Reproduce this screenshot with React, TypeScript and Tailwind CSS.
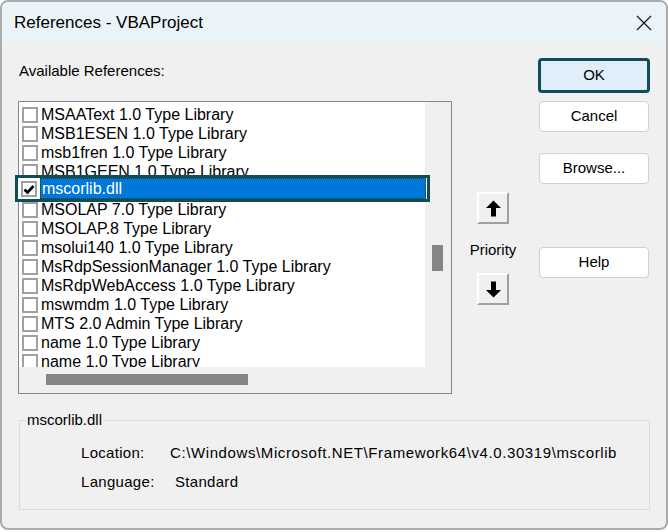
import React from "react";

const items = [
  "MSAAText 1.0 Type Library",
  "MSB1ESEN 1.0 Type Library",
  "msb1fren 1.0 Type Library",
  "MSB1GEEN 1.0 Type Library",
  "mscorlib.dll",
  "MSOLAP 7.0 Type Library",
  "MSOLAP.8 Type Library",
  "msolui140 1.0 Type Library",
  "MsRdpSessionManager 1.0 Type Library",
  "MsRdpWebAccess 1.0 Type Library",
  "mswmdm 1.0 Type Library",
  "MTS 2.0 Admin Type Library",
  "name 1.0 Type Library",
  "name 1.0 Type Library",
];

const SELECTED = 4;

function CheckMark() {
  return (
    <svg width="12" height="11" viewBox="0 0 12 11">
      <polyline points="1.5,5.5 4.5,8.5 10.5,2" fill="none" stroke="#000" strokeWidth="2.6" />
    </svg>
  );
}

function Box({ checked }: { checked?: boolean }) {
  return (
    <div className="w-[16px] h-[16px] border-2 border-[#a0a0a0] bg-white flex items-center justify-center shrink-0">
      {checked && <CheckMark />}
    </div>
  );
}

function Arrow({ down }: { down?: boolean }) {
  return (
    <button className="w-[32px] h-[32px] bg-[#f0f0f0] border-2 border-t-white border-l-white border-r-[#a0a0a0] border-b-[#a0a0a0] flex items-center justify-center">
      <svg width="15" height="17" viewBox="0 0 15 17" className={down ? "rotate-180" : ""}>
        <polygon points="0,8 7.5,0.5 15,8 10,8 10,16.5 5,16.5 5,8" fill="#000" />
      </svg>
    </button>
  );
}

export default function App() {
  return (
    <div className="w-[668px] h-[532px] bg-white" style={{ fontFamily: '"Liberation Sans", Arial, sans-serif' }}>
      <div className="w-[668px] h-[530px] rounded-lg border-2 border-[#ababab] bg-[#f0f0f0] overflow-hidden text-black">
        {/* title bar */}
        <div className="h-[42px] bg-[#eaf4f8] flex items-center justify-between pl-[12px] pr-[14px]">
          <span className="text-[17px]">References - VBAProject</span>
          <svg width="16" height="16" viewBox="0 0 16 16">
            <path d="M1 1 L15 15 M15 1 L1 15" stroke="#1a1a1a" strokeWidth="1.3" />
          </svg>
        </div>

        <div className="pl-[16px] pt-[14px] text-[15px]">
          <div className="flex items-start">
            {/* references list */}
            <div className="w-[434px]">
              <div className="mt-[3px] leading-[20px] pl-[1px]">Available References:</div>
              <div className="mt-[20px] h-[293px] border border-[#828790] flex flex-col">
                <div className="flex h-[265px]">
                  <div className="flex-1 bg-white pt-[3px] overflow-y-clip text-[16px]">
                    {items.map((name, i) => (
                      <div key={i} className="relative h-[19px] flex items-center pl-[3px]">
                        <Box />
                        <span className={`ml-[3px] leading-[19px] whitespace-nowrap ${i === SELECTED ? "invisible" : ""}`}>
                          {name}
                        </span>
                        {i === SELECTED && (
                          <div className="absolute z-10 left-[-4px] right-[-5px] top-[-6px] bottom-[-2px] border-[3px] border-[#0e4e55] bg-white flex items-stretch">
                            <div className="pl-[3px] pt-[1px] flex items-center">
                              <Box checked />
                            </div>
                            <div className="flex-1 ml-[3px] mr-[1px] bg-[#0078d7] border border-dotted border-[#3a2a10] text-white flex items-center pl-[1px]">
                              {name}
                            </div>
                          </div>
                        )}
                      </div>
                    ))}
                  </div>
                  <div className="w-[26px] pt-[143px] pl-[7px]">
                    <div className="w-[11px] h-[26px] bg-[#858585]" />
                  </div>
                </div>
                <div className="h-[26px] pl-[27px] pt-[7px]">
                  <div className="w-[202px] h-[11px] bg-[#858585]" />
                </div>
              </div>
            </div>

            {/* priority */}
            <div className="ml-[14px] w-[54px] mt-[134px] flex flex-col items-center">
              <Arrow />
              <div className="mt-[16px] leading-[20px]">Priority</div>
              <div className="mt-[13px]">
                <Arrow down />
              </div>
            </div>

            {/* buttons */}
            <div className="ml-[18px] w-[112px] flex flex-col">
              <button className="h-[35px] rounded-[4px] border-[3px] border-[#0e4e55] bg-[#e0eef9]">OK</button>
              <button className="mt-[8px] mx-[1px] h-[31px] rounded-[4px] border border-[#d0d0d0] bg-white">Cancel</button>
              <button className="mt-[21px] mx-[1px] h-[31px] rounded-[4px] border border-[#d0d0d0] bg-white">Browse...</button>
              <button className="mt-[63px] mx-[1px] h-[31px] rounded-[4px] border border-[#d0d0d0] bg-white">Help</button>
            </div>
          </div>

          {/* details */}
          <fieldset className="mt-[16px] ml-[1px] w-[631px] h-[100px] border border-[#dcdcdc] pl-[6px]">
            <legend className="px-[1px] leading-[20px]">mscorlib.dll</legend>
            <div className="pl-[55px]">
              <div className="mt-[13px] flex leading-[20px]">
                <span className="w-[89px] tracking-[0.3px]">Location:</span>
                <span className="tracking-[0.6px]">C:\Windows\Microsoft.NET\Framework64\v4.0.30319\mscorlib</span>
              </div>
              <div className="mt-[9px] flex leading-[20px]">
                <span className="w-[94px] tracking-[0.3px]">Language:</span>
                <span className="tracking-[0.3px]">Standard</span>
              </div>
            </div>
          </fieldset>
        </div>
      </div>
    </div>
  );
}
